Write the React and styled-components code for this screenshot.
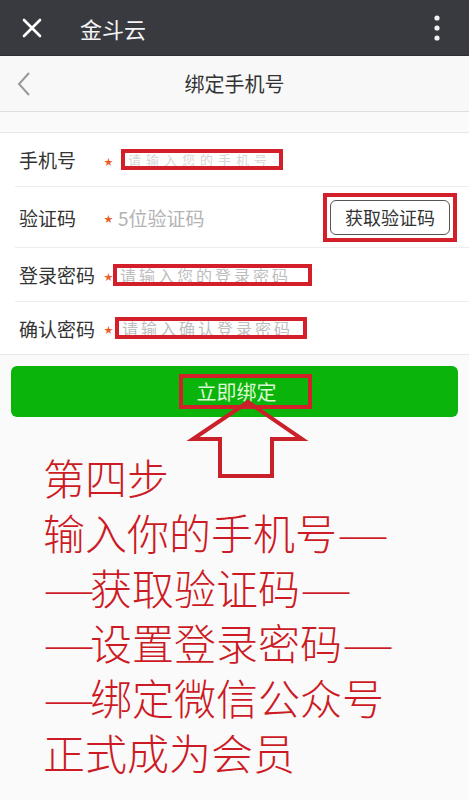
import React from "react";
import styled, { createGlobalStyle } from "styled-components";

const GlobalStyle = createGlobalStyle`
  html, body { margin: 0; padding: 0; }
  body {
    background: #fafafa;
    font-family: "Noto Sans CJK SC", "Noto Sans", sans-serif;
    width: 469px;
    height: 800px;
    overflow: hidden;
  }
`;

const Page = styled.div`
  width: 469px;
  min-height: 800px;
  background: #fafafa;
`;

const TopBar = styled.header`
  height: 56px;
  background: #393a3f;
  display: flex;
  align-items: center;
  padding: 0 0 0 22px;
  box-sizing: border-box;
  border-bottom: 1px solid #2e2f33;
`;

const AppTitle = styled.div`
  margin-left: 38px;
  font-size: 22px;
  color: #f4f4f4;
  line-height: 1;
  flex: 1;
`;

const MenuButton = styled.div`
  width: 12px;
  margin-right: 26px;
  display: flex;
  justify-content: center;
`;

const NavBar = styled.nav`
  height: 56px;
  background: #f8f8f9;
  border-bottom: 1px solid #dedede;
  display: grid;
  grid-template-columns: 60px 1fr 60px;
  align-items: center;
  box-sizing: border-box;
`;

const BackButton = styled.div`
  padding-left: 17px;
  display: flex;
  align-items: center;
`;

const NavTitle = styled.div`
  text-align: center;
  font-size: 20px;
  color: #333;
`;

const Form = styled.section`
  margin-top: 20px;
  background: #fff;
  border-top: 1px solid #e8e8e8;
  border-bottom: 1px solid #e8e8e8;
`;

const Row = styled.div`
  height: ${(p) => p.$h}px;
  margin-left: 15px;
  padding-left: 4px;
  display: flex;
  align-items: center;
  border-bottom: ${(p) => (p.$last ? "none" : "1px solid #ececec")};
`;

const Label = styled.div`
  width: 85px;
  flex-shrink: 0;
  font-size: 19px;
  color: #333;
  line-height: 1;
`;

const Star = styled.span`
  display: inline-block;
  width: 7px;
  flex-shrink: 0;
  color: #e8602c;
  font-size: 9px;
  line-height: 1;
  margin-top: 3px;
`;

const Placeholder = styled.span`
  margin-left: 7px;
  font-size: 19px;
  color: #b3b3b3;
  line-height: 1;
  flex: 1;
`;

const Mark = styled.span`
  display: inline-block;
  box-sizing: border-box;
  margin-left: ${(p) => p.$ml}px;
  width: ${(p) => p.$w}px;
  height: ${(p) => p.$h}px;
  border: 4px solid #d21f2a;
  background: #fff;
  overflow: hidden;
  white-space: nowrap;
  font-size: ${(p) => p.$fs}px;
  line-height: ${(p) => p.$h - 8}px;
  padding-left: 3px;
  letter-spacing: ${(p) => p.$ls}px;
  color: ${(p) => p.$c};
`;

const CodeMark = styled.span`
  margin-left: auto;
  margin-right: 12px;
  border: 4px solid #d21f2a;
  padding: 3px;
  display: flex;
`;

const CodeButton = styled.button`
  width: 120px;
  height: 35px;
  border: 1px solid #555;
  border-radius: 6px;
  background: #fff;
  font-family: inherit;
  font-size: 18px;
  color: #333;
  padding: 0;
`;

const Lower = styled.div`
  position: relative;
  padding-top: 11px;
`;

const SubmitButton = styled.button`
  display: flex;
  align-items: center;
  justify-content: center;
  margin: 0 11px;
  width: 447px;
  height: 51px;
  border: none;
  border-radius: 6px;
  background: #0bb40b;
  font-family: inherit;
  padding: 0;
`;

const SubmitLabel = styled.span`
  margin-left: 21px;
  border: 4px solid #d21f2a;
  padding: 0 31px 0 14px;
  height: 35px;
  box-sizing: border-box;
  display: flex;
  align-items: center;
  font-size: 20px;
  color: #dcf8d4;
`;

const Arrow = styled.svg`
  position: absolute;
  left: 190px;
  top: 40px;
  overflow: visible;
`;

const Steps = styled.div`
  margin: 32px 0 0 43px;
  font-size: 42px;
  font-weight: 300;
  line-height: 55px;
  color: #cc1b24;
  white-space: nowrap;
`;

const StepLine = styled.div``;

const Dash = styled.span`
  display: inline-block;
  width: 47px;
  overflow: visible;
  transform: scaleX(1.4);
  transform-origin: left center;
`;

export default function App() {
  return (
    <Page>
      <GlobalStyle />
      <TopBar>
        <svg width="20" height="20" viewBox="0 0 20 20">
          <path d="M2 2 L18 18 M18 2 L2 18" stroke="#fff" strokeWidth="2.6" strokeLinecap="round" />
        </svg>
        <AppTitle>金斗云</AppTitle>
        <MenuButton>
          <svg width="6" height="26" viewBox="0 0 6 26">
            <circle cx="3" cy="3" r="2.6" fill="#f2f2f2" />
            <circle cx="3" cy="13" r="2.6" fill="#f2f2f2" />
            <circle cx="3" cy="23" r="2.6" fill="#f2f2f2" />
          </svg>
        </MenuButton>
      </TopBar>
      <NavBar>
        <BackButton>
          <svg width="14" height="24" viewBox="0 0 14 24">
            <path d="M12 1 L2 12 L12 23" fill="none" stroke="#999" strokeWidth="2" />
          </svg>
        </BackButton>
        <NavTitle>绑定手机号</NavTitle>
        <div />
      </NavBar>
      <Form>
        <Row $h={53}>
          <Label>手机号</Label>
          <Star>★</Star>
          <Mark $ml={10} $w={162} $h={21} $fs={13} $ls={5} $c="#d6d6d6">请输入您的手机号</Mark>
        </Row>
        <Row $h={60}>
          <Label>验证码</Label>
          <Star>★</Star>
          <Placeholder>5位验证码</Placeholder>
          <CodeMark>
            <CodeButton>获取验证码</CodeButton>
          </CodeMark>
        </Row>
        <Row $h={53}>
          <Label>登录密码</Label>
          <Star>★</Star>
          <Mark $ml={2} $w={199} $h={22} $fs={16} $ls={3} $c="#bdbdbd">请输入您的登录密码</Mark>
        </Row>
        <Row $h={52} $last>
          <Label>确认密码</Label>
          <Star>★</Star>
          <Mark $ml={4} $w={192} $h={22} $fs={16} $ls={3} $c="#bdbdbd">请输入确认登录密码</Mark>
        </Row>
      </Form>
      <Lower>
        <SubmitButton>
          <SubmitLabel>立即绑定</SubmitLabel>
        </SubmitButton>
        <Arrow width="116" height="84" viewBox="0 0 116 84">
          <path
            d="M58 7 L3 44 L30 44 L30 81 L82 81 L82 44 L112 44 Z"
            fill="none"
            stroke="#c9202a"
            strokeWidth="4"
            strokeLinejoin="miter"
          />
        </Arrow>
        <Steps>
          <StepLine>第四步</StepLine>
          <StepLine>输入你的手机号<Dash>—</Dash></StepLine>
          <StepLine><Dash>—</Dash>获取验证码<Dash>—</Dash></StepLine>
          <StepLine><Dash>—</Dash>设置登录密码<Dash>—</Dash></StepLine>
          <StepLine><Dash>—</Dash>绑定微信公众号</StepLine>
          <StepLine>正式成为会员</StepLine>
        </Steps>
      </Lower>
    </Page>
  );
}
